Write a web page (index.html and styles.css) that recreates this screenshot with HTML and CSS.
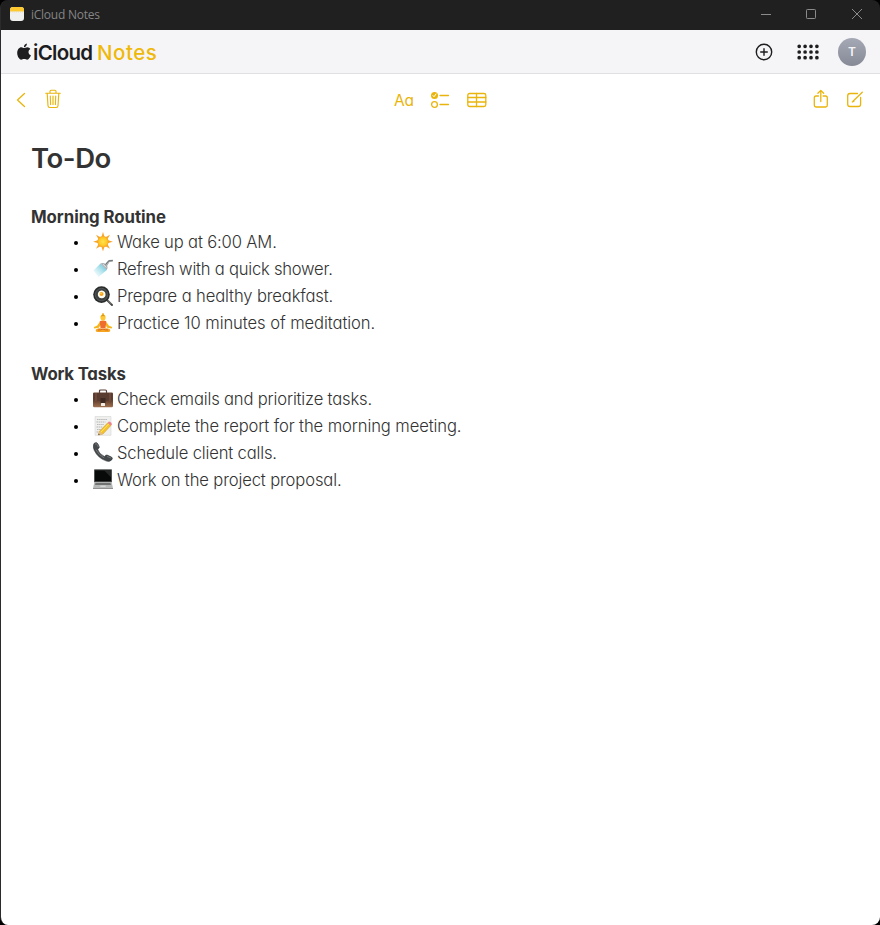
FILE: index.html
```html
<!DOCTYPE html>
<html lang="en">
<head>
<meta charset="utf-8">
<title>iCloud Notes</title>
<link rel="stylesheet" href="styles.css">
</head>
<body>
<div class="window">
  <header class="titlebar">
    <svg class="app-icon" width="14" height="14" viewBox="0 0 14 14"><defs><clipPath id="appclip"><rect width="14" height="14" rx="3"/></clipPath></defs><g clip-path="url(#appclip)"><rect width="14" height="14" fill="#f0f0ee"/><rect width="14" height="4.5" fill="#fdc930"/><path d="M0 5h14" stroke="#dfd6b8" stroke-width=".7" stroke-dasharray="1 1"/></g></svg>
    <span class="window-title">iCloud Notes</span>
    <div class="controls">
      <svg width="46" height="28" viewBox="0 0 46 28"><path d="M18 14.5h10"/></svg>
      <svg width="46" height="28" viewBox="0 0 46 28"><rect x="17.5" y="9.5" width="9" height="9" rx=".8"/></svg>
      <svg width="46" height="28" viewBox="0 0 46 28"><path d="M17 9l10 10M27 9l-10 10"/></svg>
    </div>
  </header>
  <div class="app">
    <div class="brandbar">
      <svg class="apple" width="14" height="18" viewBox="0 0 14 18"><path fill="#1d1d1f" d="M9.900.5c.1 2-1.300 3.700-3 3.700-.2-1.800 1.300-3.500 3-3.700zM7.100 5c.8 0 1.700-.8 3.200-.8 1.300.1 2.400.7 3 1.700-2.700 1.600-2.200 5.300.6 6.400-.6 1.700-2.100 4.400-3.700 4.400-1.200 0-1.600-.7-3-.7s-1.900.7-3 .7C2.200 16.700.2 13 .2 10c0-3.600 2-5.800 4.200-5.800C5.600 4.200 6.400 5 7.100 5z"/></svg>
      <span class="brand">iCloud</span><span class="product">Notes</span>
      <div class="account">
        <svg width="18" height="18" viewBox="0 0 18 18"><g fill="none" stroke="#1d1d1f" stroke-width="1.400"><circle cx="9" cy="9" r="7.700"/><path d="M9 5.700v6.600M5.700 9h6.600" stroke-linecap="round"/></g></svg>
        <svg class="launcher" width="22" height="16" viewBox="0 0 22 16"><g stroke="#1d1d1f" stroke-width="3.700" stroke-linecap="round"><path d="M2.200 2.300h0M8.100 2.300h0M14 2.300h0M19.900 2.300h0M2.200 8h0M8.100 8h0M14 8h0M19.900 8h0M2.200 13.700h0M8.100 13.700h0M14 13.700h0M19.900 13.700h0"/></g></svg>
        <span class="avatar">T</span>
      </div>
    </div>
    <nav class="toolbar">
      <div class="group left">
        <svg width="10" height="16" viewBox="0 0 10 16"><path d="M8.500 1.500L1.500 8l7 6.500"/></svg>
        <svg class="raised" width="16" height="20" viewBox="0 0 16 20"><path d="M.7 4.200h14.600M5 4V2.300Q5 1.200 6.100 1.200h3.800q1.100 0 1.100 1.100V4M2.200 4.500l.8 12.300q.1 1.700 1.700 1.700h6.600q1.600 0 1.700-1.700l.8-12.300M5.300 7l.3 8.500M8 7v8.500M10.700 7l-.3 8.500" stroke-width="1.150"/></svg>
      </div>
      <div class="group center">
        <span class="format">Aa</span>
        <svg width="20" height="18" viewBox="0 0 20 18"><circle cx="4.500" cy="4.500" r="3.500" fill="#e9b50c" stroke="none"/><path d="M3 4.600l1 1.200 2-2.800" stroke="#fff" stroke-width="1"/><circle cx="4.500" cy="13.500" r="2.900"/><path d="M10 4.500h8.500M10 13.500h8.500"/></svg>
        <svg width="20" height="16" viewBox="0 0 20 16"><rect x=".8" y="1.500" width="18" height="13" rx="1.800"/><path d="M.8 5.500h18M.8 10h18M9.500 1.500v13"/></svg>
      </div>
      <div class="group right">
        <svg class="raised" width="16" height="20" viewBox="0 0 16 20"><path d="M5.500 7H3Q1.300 7 1.300 8.700v7.600Q1.300 18 3 18h9.600q1.700 0 1.700-1.700V8.700Q14.300 7 12.600 7h-2.500M7.800 12.500V1.500M4.900 4.300l2.900-2.900 2.900 2.900"/></svg>
        <svg width="18" height="18" viewBox="0 0 18 18"><path d="M11.500 2.500H4Q1.700 2.500 1.700 4.800v8.400q0 2.300 2.300 2.300h8.300q2.300 0 2.300-2.300V6.500M7 10.300L16.300 1.300M6.300 11l1.700-.8"/></svg>
      </div>
    </nav>
    <main class="note">
      <h1>To-Do</h1>
      <h2 class="routine">Morning Routine</h2>
      <ul>
        <li><svg class="emoji" viewBox="0 0 20 20"><defs><radialGradient id="sun"><stop offset="0" stop-color="#ffe34b"/><stop offset=".7" stop-color="#ffc928"/><stop offset="1" stop-color="#f8a322"/></radialGradient></defs><path fill="#f7a52a" d="M10-.2l1.600 5.400H8.400zM10 19.600l1.600-5.400H8.400zM.1 9.700l5.400-1.600v3.200zM19.900 9.700l-5.400-1.600v3.200zM3 2.700l4.900 2.700-2.200 2.200zM17 2.700l-4.900 2.700 2.200 2.200zM3 16.700L7.900 14l-2.200-2.200zM17 16.700L12.100 14l2.200-2.200z"/><circle cx="10" cy="9.700" r="5.600" fill="url(#sun)"/></svg><span class="t1">Wake up at 6:00 AM.</span></li>
        <li><svg class="emoji" viewBox="0 0 20 20"><defs><linearGradient id="water" x1="1" y1="0" x2="0" y2="1"><stop offset="0" stop-color="#43b6cf"/><stop offset="1" stop-color="#e8fbff" stop-opacity=".3"/></linearGradient></defs><path fill="url(#water)" d="M7.500 4.600L.5 11.500 5.500 18l8.300-7z"/><path fill="#a7acae" d="M7.500 4.600L13.700 11q1.500-1.800.5-4.300L16.500 3l3.300-.2V.7l-4.300.4-3.200 3.600q-2.400-1.200-4.800-.1z"/><path d="M12.600 5.500l3.200-3.600 4-.5" fill="none" stroke="#6d7376" stroke-width="1"/><path d="M10 5.200l3.200 3.300" stroke="#eee" stroke-width="1"/></svg><span class="t2">Refresh with a quick shower.</span></li>
        <li><svg class="emoji" viewBox="0 0 20 20"><path d="M13 13l6 6" stroke="#444" stroke-width="1.900" stroke-linecap="round"/><path d="M14.500 14l3.800 3.900" stroke="#a3a3a3" stroke-width=".7"/><circle cx="8.500" cy="8.600" r="8.300" fill="#292a2a"/><circle cx="8.500" cy="8.600" r="6.300" fill="#3e4142" stroke="#717575" stroke-width=".5"/><path fill="#fffdf2" d="M5 7q1-3 4-2.500 3.400.6 3.500 3.700.4 3.200-3.200 4-3 .5-3.900-1.700-1-1.200-.4-3.500z"/><circle cx="8.500" cy="8" r="2" fill="#f9a11d"/><circle cx="8" cy="7.500" r=".8" fill="#ffd84c"/></svg><span class="t3">Prepare a healthy breakfast.</span></li>
        <li><svg class="emoji" viewBox="0 0 20 20"><path fill="#f6b51e" d="M7.500 8L4 12.800.8 14l.5 1.500 4.600-.8L8 11zM12.500 8l3.500 4.800 3.200 1.200-.5 1.500-4.600-.8L12 11z"/><path d="M3 16.500q3-2 7-.5 4-1.500 7 .5.900 2-1.500 2.500h-11Q2.100 18.500 3 16.500z" fill="#f5a522"/><path fill="#ee6c2d" d="M6.700 8.200q3.300-1.500 6.600 0l-.8 7H7.500z"/><path d="M5 17q3 .1 5-1 2 1.100 5 1" fill="none" stroke="#d96720" stroke-width="1"/><circle cx="10" cy="1.300" r="1.100" fill="#e6a517"/><ellipse cx="10" cy="4.600" rx="2.600" ry="3.100" fill="#ffc732"/><path d="M7.600 3.500Q10-.1 12.400 3.500 10 2.300 7.600 3.500z" fill="#de9514"/></svg><span class="t4">Practice 10 minutes of meditation.</span></li>
      </ul>
      <h2 class="work">Work Tasks</h2>
      <ul>
        <li><svg class="emoji" viewBox="0 0 20 20"><defs><linearGradient id="leather" x1="0" y1="0" x2="0" y2="1"><stop offset="0" stop-color="#6d4937"/><stop offset=".55" stop-color="#65412f"/><stop offset="1" stop-color="#a0714f"/></linearGradient></defs><path d="M6.500 4V2Q6.500 1 7.500 1h5q1 0 1 1v2" fill="none" stroke="#594139" stroke-width="1.200"/><rect y="3.500" width="20" height="14.800" rx="1.200" fill="url(#leather)"/><path d="M.5 4h19v6.500q-9.500 3.500-19 0z" fill="#593b2f"/><path d="M3 4v8M17 4v8" stroke="#805745"/><path fill="#3f2a23" d="M7.500 9h5v5h-5z"/><rect x="8" y="14" width="4" height="3" rx=".5" fill="#f1eee7"/></svg><span class="t5">Check emails and prioritize tasks.</span></li>
        <li><svg class="emoji" viewBox="0 0 20 20"><path fill="#efefed" stroke="#cfcfcd" stroke-width=".5" d="M2 .5h16v18.800H2z"/><path d="M4 3.500h10M3.500 6h9M4 8.500h7M3.500 11h6M4 13.500h4M3.500 16h3" stroke="#aaa" stroke-width=".8" stroke-dasharray="1.500 .6"/><path fill="#f6c32c" stroke="#c38d25" stroke-width=".5" d="M6.500 15.300l8.300-8.500 3 2.800-8 8.500-4.500 1z"/><path d="M8 16l8-8.300" stroke="#ffe56a"/><path fill="#ed828d" d="M14.800 6.800l1.200-1.200q2.800.6 3 2.800l-1.200 1.200z"/><path fill="#e6bd89" d="M6.500 15.300l3.300 2.800-4.500 1z"/><path fill="#444" d="M5.700 17.600l1.200 1.100-1.600.4z"/></svg><span class="t6">Complete the report for the morning meeting.</span></li>
        <li><svg class="emoji raised-emoji" viewBox="0 0 20 20"><path fill="#46494b" stroke="#292c2e" stroke-width=".5" d="M1.200 1.300Q3.500-.5 5 2l1.200 2.600q.6 1.500-1.500 2.500 1 4.700 6.800 7.400 1.300-2.200 2.800-1.400l4.200 1.900q1.600 1 .4 2.700-2 2.500-5.400 1.400Q5 16.300 1.200 8.300-.8 3.500 1.200 1.300z"/><path d="M2 2.200Q3.700.8 4.400 3l.9 2M3 7.700q2.500 5.500 8.200 8.200M14 14.400l4.300 1.700" fill="none" stroke="#858a8c" stroke-width=".7"/></svg><span class="t7">Schedule client calls.</span></li>
        <li><svg class="emoji raised-emoji" viewBox="0 0 20 20"><rect x="1" y=".3" width="18" height="13.200" rx=".7" fill="#525454"/><path fill="#080909" d="M2 1.300h16v11H2z"/><path d="M11 1.300h7v7z" fill="#252727"/><path fill="#b6b7b7" d="M1.300 13.500h17.400L20 19.300H0z"/><path fill="#717272" d="M2.500 13.900h15l.5 2.200H2z"/><path fill="#d6d6d6" d="M7.500 16.500h5l.3 1.500H7.200z"/><path d="M0 19.500h20" stroke="#777" stroke-width=".8"/></svg><span class="t8">Work on the project proposal.</span></li>
      </ul>
    </main>
  </div>
</div>
</body>
</html>
```
FILE: styles.css
```css
* { box-sizing: border-box; }
body { margin: 0; background: #000; font-family: Inter, "Liberation Sans", sans-serif; }
svg { display: block; flex: none; }
.window { height: 925px; background: #202020; border-radius: 8px; overflow: hidden; display: flex; flex-direction: column; border-left: 1px solid #2b2b2d; }
.titlebar { height: 30px; flex: none; display: flex; align-items: center; padding-left: 9px; padding-bottom: 2px; }
.window-title { font: 12px "Open Sans", sans-serif; letter-spacing: -.25px; color: #858585; margin: 0 0 0 7px; }
.controls { margin: 0 -1px 0 auto; display: flex; }
.controls path, .controls rect { fill: none; stroke: #8b8b8b; stroke-width: 1; }
.app { flex: 1; background: #fff; }
.brandbar { height: 44px; background: #f5f5f7; border-bottom: 1px solid #e0e0e3; display: flex; align-items: center; padding: 0 14px 0 16px; font-size: 20.5px; line-height: 28px; white-space: nowrap; }
.apple { margin-right: 2px; }
.brand { color: #1d1d1f; font-weight: 600; width: 64px; letter-spacing: -.7px; padding-top: 2px; }
.product { color: #efb90b; font-weight: 500; letter-spacing: .5px; padding-top: 2px; }
.account { margin-left: auto; display: flex; align-items: center; }
.launcher { margin: 0 19px 0 24px; }
.avatar { width: 28px; height: 28px; border-radius: 50%; background: linear-gradient(#a5a9b6, #868a96); color: #f5f5f7; font-size: 12px; font-weight: 600; text-align: center; }
.toolbar { height: 52px; display: grid; grid-template-columns: 1fr auto 1fr; align-items: center; padding: 0 16px 0 15px; }
.toolbar svg { fill: none; stroke: #e9b50c; stroke-width: 1.3; stroke-linecap: round; stroke-linejoin: round; }
.toolbar .raised { margin-bottom: 2px; }
.group { display: flex; align-items: center; }
.left { gap: 19px; }
.center { gap: 17px; }
.right { gap: 17px; justify-content: flex-end; }
.format { color: #e9b50c; font-size: 15.5px; line-height: 20px; padding-top: 2px; margin: 0 -1px 0 1px; font-feature-settings: "cv11"; }
.note { padding: 14px 30px 0; color: #333; font-feature-settings: "cv11"; }
h1 { margin: 0; padding-top: 1px; font-size: 27.5px; line-height: 35px; font-weight: 600; letter-spacing: -.45px; }
h2 { margin: 0; height: 26px; padding-top: 1px; font-size: 16.8px; line-height: 26px; font-weight: 700; white-space: nowrap; }
.routine { margin-top: 27px; letter-spacing: -.05px; }
.work { margin-top: 23px; letter-spacing: -.2px; }
ul { list-style: none; margin: 0; padding: 0 0 0 42px; }
li { display: flex; align-items: center; height: 27px; font-size: 16.6px; line-height: 27px; font-weight: 300; white-space: nowrap; }
li::before { content: ""; width: 4px; height: 4px; border-radius: 50%; background: #000; margin: 1px 16px 0 1px; }
.emoji { width: 20px; height: 20px; margin: -2px 4px 0 -1px; }
.raised-emoji { margin-top: -4px; }
.t1 { letter-spacing: -.15px; }
.t2 { letter-spacing: -.23px; }
.t3 { letter-spacing: -.13px; }
.t4 { letter-spacing: -.08px; }
.t5 { letter-spacing: -.17px; }
.t6 { letter-spacing: -.11px; }
.t7 { letter-spacing: -.16px; }
.t8 { letter-spacing: -.13px; }
```
